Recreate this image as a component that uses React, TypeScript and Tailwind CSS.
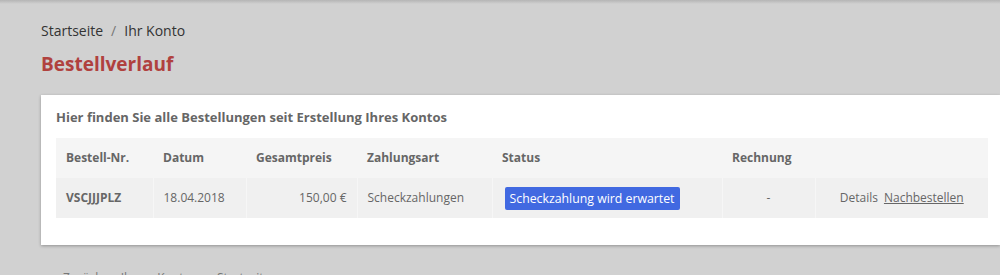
import React from "react";

export default function App() {
  const font = { fontFamily: '"Open Sans", "Noto Sans", sans-serif' };
  return (
    <div className="w-[1000px] h-[275px] overflow-hidden bg-[#d1d1d1] relative" style={font}>
      <div className="absolute top-0 left-0 right-0 h-[4px] bg-gradient-to-b from-[#b5b5b5] to-[#d1d1d1]" />
      <div className="pl-[41px] pt-[21px]">
        <div className="flex items-center text-[14px] leading-[20px] text-[#333]">
          <span>Startseite</span>
          <span className="mx-[8px] text-[#777]">/</span>
          <span>Ihr Konto</span>
        </div>
        <h1 className="mt-[9px] text-[19px] leading-[28px] font-bold text-[#b0413e]">Bestellverlauf</h1>
        <div className="mt-[17px] bg-white w-[959px] h-[150px] shadow-[0_1px_3px_rgba(0,0,0,0.3)] px-[15px] pt-[12px]">
          <div className="text-[13px] leading-[20px] font-bold text-[#666]">
            Hier finden Sie alle Bestellungen seit Erstellung Ihres Kontos
          </div>
          <table className="mt-[11px] w-[932px] border-collapse text-[12px] text-[#666] table-fixed">
            <colgroup>
              <col className="w-[97px]" />
              <col className="w-[93px]" />
              <col className="w-[111px]" />
              <col className="w-[135px]" />
              <col className="w-[230px]" />
              <col className="w-[93px]" />
              <col className="w-[173px]" />
            </colgroup>
            <thead>
              <tr className="bg-[#f5f5f5] h-[40px]">
                <th className="text-left font-bold px-[10px]">Bestell-Nr.</th>
                <th className="text-left font-bold px-[10px]">Datum</th>
                <th className="text-left font-bold px-[10px]">Gesamtpreis</th>
                <th className="text-left font-bold px-[10px]">Zahlungsart</th>
                <th className="text-left font-bold px-[10px]">Status</th>
                <th className="text-left font-bold px-[10px]">Rechnung</th>
                <th className="px-[10px]"></th>
              </tr>
            </thead>
            <tbody>
              <tr className="bg-[#f0f0f0] h-[40px]">
                <td className="px-[10px] font-bold border-r border-[#f6f6f6]">VSCJJJPLZ</td>
                <td className="px-[10px] border-r border-[#f6f6f6]">18.04.2018</td>
                <td className="px-[10px] text-right border-r border-[#f6f6f6]">150,00 €</td>
                <td className="px-[10px] border-r border-[#f6f6f6]">Scheckzahlungen</td>
                <td className="px-[12px] border-r border-[#f6f6f6]">
                  <span className="inline-block bg-[#4169e1] text-white rounded-[2px] px-[5px] leading-[23px] text-[12.3px]">
                    Scheckzahlung wird erwartet
                  </span>
                </td>
                <td className="px-[10px] text-center border-r border-[#f6f6f6]">-</td>
                <td className="px-[10px] text-center">
                  <span>Details</span>
                  <span className="ml-[6px] underline">Nachbestellen</span>
                </td>
              </tr>
            </tbody>
          </table>
        </div>
        <div className="mt-[24px] ml-[5px] flex items-center text-[12px] leading-[18px] text-[#777]">
          <span className="mr-[5px]">←</span>
          <span>Zurück zu Ihrem Konto</span>
          <span className="ml-[14px] mr-[5px]">⌂</span>
          <span>Startseite</span>
        </div>
      </div>
    </div>
  );
}
